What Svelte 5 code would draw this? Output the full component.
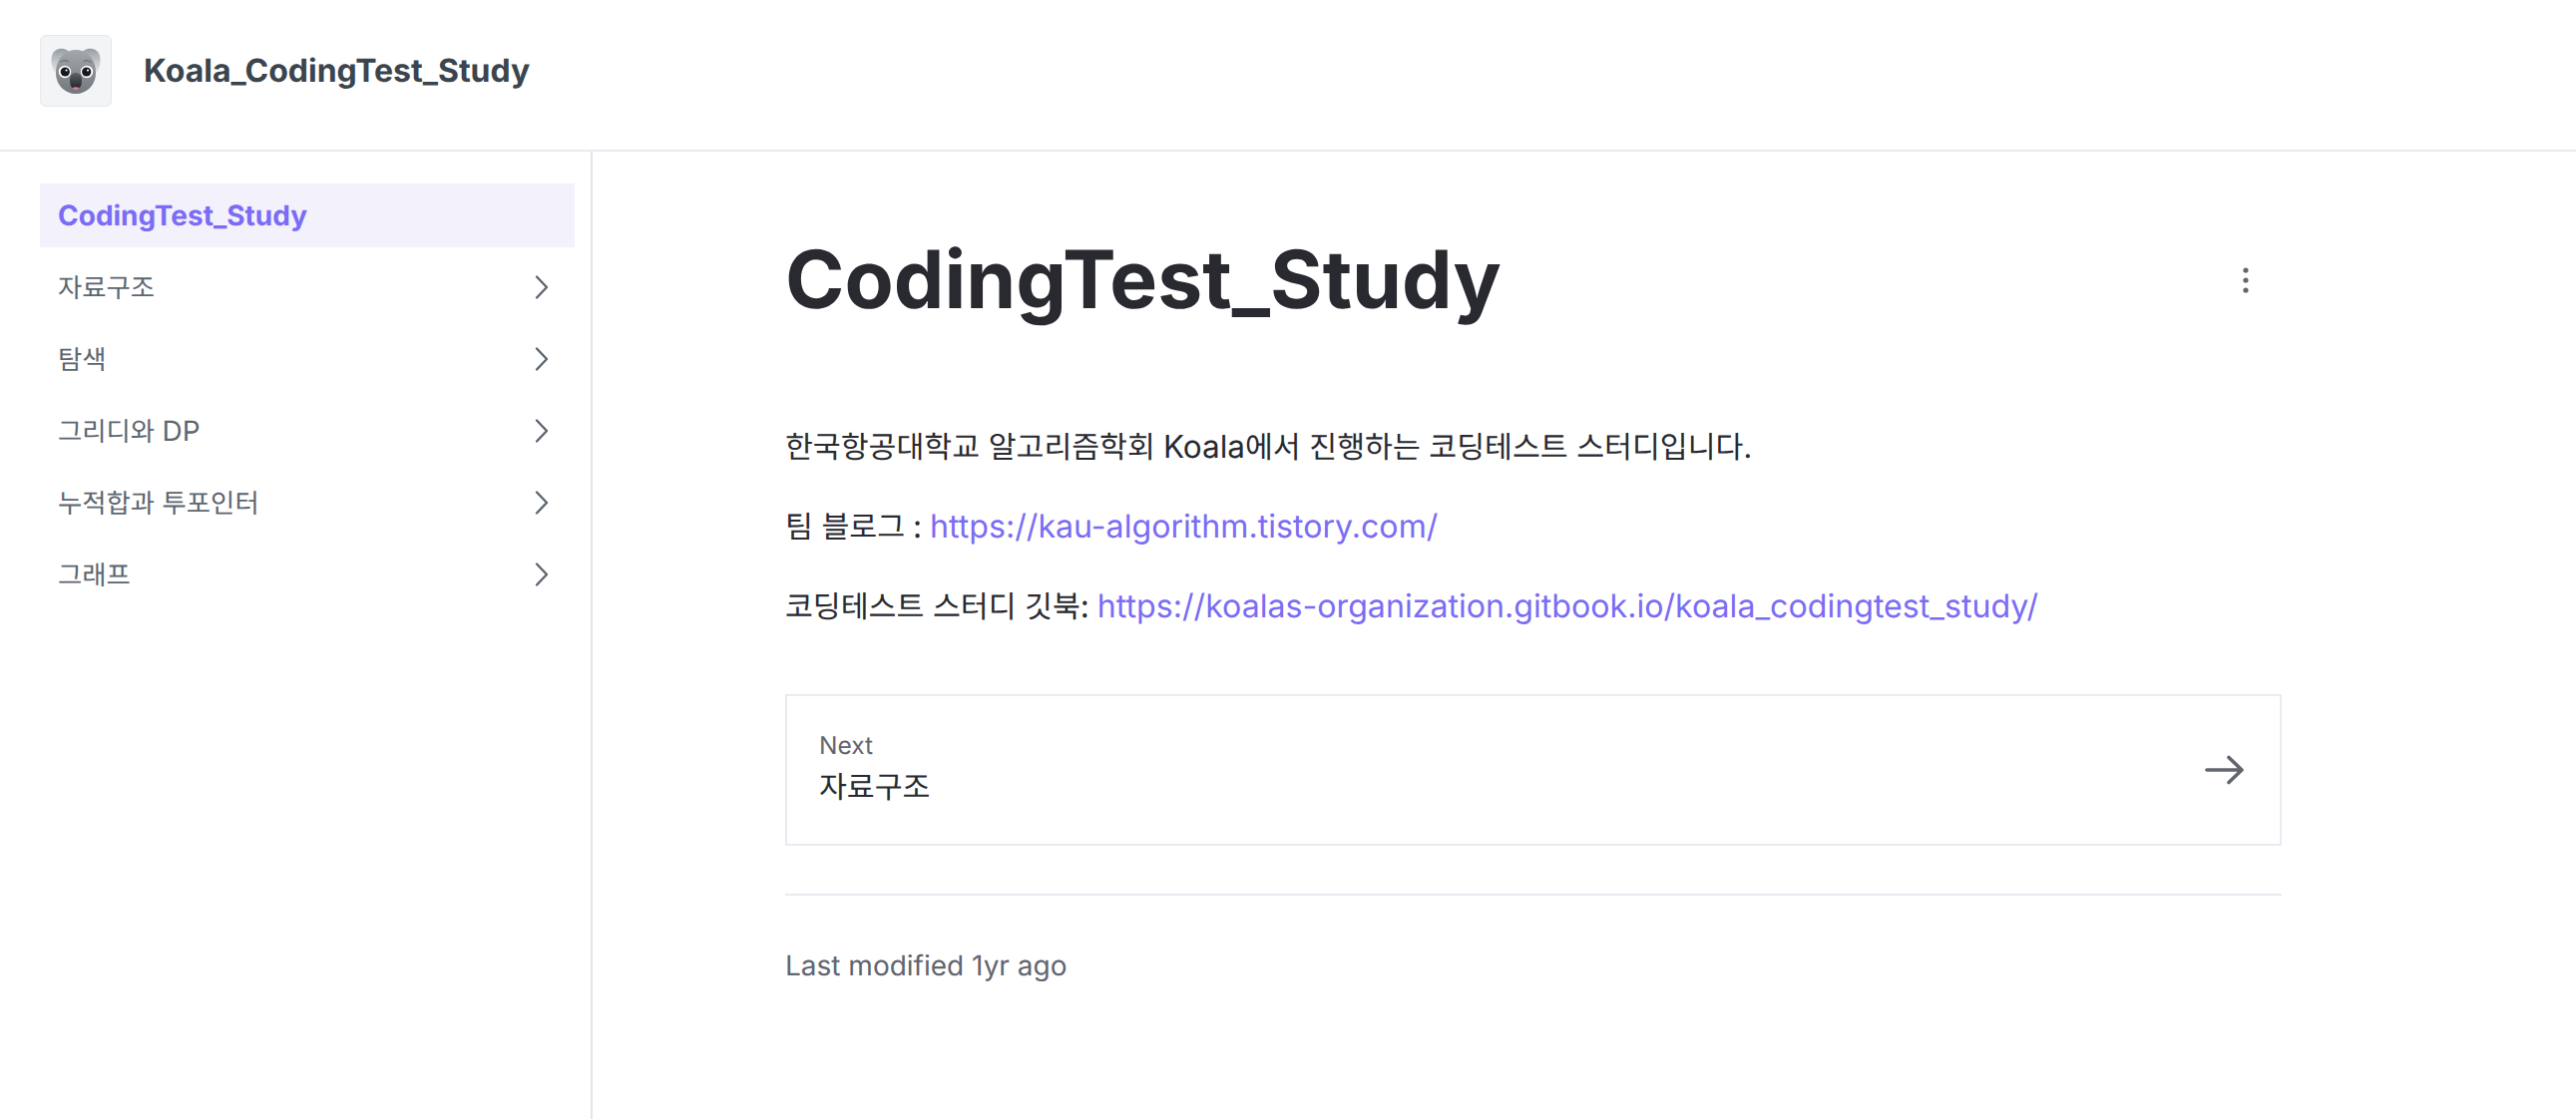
<script>
  const items = [
    { ko: '자료구조', en: '' },
    { ko: '탐색', en: '' },
    { ko: '그리디와 ', en: 'DP' },
    { ko: '누적합과 투포인터', en: '' },
    { ko: '그래프', en: '' }
  ];
</script>

<div class="page">
  <header class="top">
    <div class="logo">
      <svg class="koala" width="60" height="56" viewBox="0 0 60 56">
        <defs>
          <linearGradient id="face" x1="0" y1="0" x2="0" y2="1">
            <stop offset="0" stop-color="#a3a8ac" />
            <stop offset="1" stop-color="#71777b" />
          </linearGradient>
          <linearGradient id="ear" x1="0" y1="0" x2="0" y2="1">
            <stop offset="0" stop-color="#979da1" />
            <stop offset="0.5" stop-color="#c4c8ca" />
            <stop offset="1" stop-color="#eceef0" />
          </linearGradient>
          <linearGradient id="nose" x1="0" y1="0" x2="0" y2="1">
            <stop offset="0" stop-color="#5e6267" />
            <stop offset="1" stop-color="#26292d" />
          </linearGradient>
        </defs>
        <path d="M7 27 C4 18 5 9 13 7 C19 6 24 9 25 13 L13 33 C10 32 8 30 7 27Z" fill="url(#ear)" />
        <path d="M53 27 C56 18 55 9 47 7 C41 6 36 9 35 13 L47 33 C50 32 52 30 53 27Z" fill="url(#ear)" />
        <path d="M30 8 C18 8 10 18 10 31 C10 44 20 52 30 52 C40 52 50 44 50 31 C50 18 42 8 30 8Z" fill="url(#face)" />
        <path d="M15 20 Q18.5 17.5 22 19.5" stroke="#787e82" stroke-width="1.6" fill="none" stroke-linecap="round" />
        <path d="M38 19.5 Q41.5 17.5 45 20" stroke="#787e82" stroke-width="1.6" fill="none" stroke-linecap="round" />
        <circle cx="19" cy="30" r="6.2" fill="#fff" />
        <circle cx="41" cy="30" r="6.2" fill="#fff" />
        <circle cx="19.3" cy="30" r="4.6" fill="#17191f" />
        <circle cx="40.7" cy="30" r="4.6" fill="#17191f" />
        <circle cx="20.6" cy="28.5" r="1.1" fill="#fff" />
        <circle cx="42" cy="28.5" r="1.1" fill="#fff" />
        <path d="M26 45 Q30 51 34 45 L34 43 L26 43Z" fill="#ea7f98" />
        <path d="M30 31 C26 31 24 34 24 38 C24 42 25 46 27 46 Q30 44.5 33 46 C35 46 36 42 36 38 C36 34 34 31 30 31Z" fill="url(#nose)" />
      </svg>
    </div>
    <div class="brand">Koala_CodingTest_Study</div>
  </header>
  <div class="body">
    <aside class="side">
      <div class="item active">CodingTest_Study</div>
      {#each items as it}
        <div class="item">
          <span class="label"><span class="ko">{it.ko}</span>{it.en}</span>
          <svg class="chev" width="16" height="26" viewBox="0 0 16 26"><path d="M3 2.5 L13 13 L3 23.5" fill="none" stroke="#5c6670" stroke-width="2.4" stroke-linecap="round" stroke-linejoin="round" /></svg>
        </div>
      {/each}
    </aside>
    <main class="main">
      <div class="titlerow">
        <h1>CodingTest_Study</h1>
        <svg class="more" width="10" height="30" viewBox="0 0 10 30"><circle cx="5" cy="5" r="2.6" fill="#62656f" /><circle cx="5" cy="15" r="2.6" fill="#62656f" /><circle cx="5" cy="25" r="2.6" fill="#62656f" /></svg>
      </div>
      <p><span class="ko">한국항공대학교 알고리즘학회</span> <span class="tight">Koala</span><span class="ko">에서 진행하는 코딩테스트 스터디입니다.</span></p>
      <p><span class="ko">팀 블로그</span> <span class="tight">:</span> <a href="#a">https://kau-algorithm.tistory.com/</a></p>
      <p><span class="ko">코딩테스트 스터디 깃북</span><span class="tight">:</span> <a href="#b">https://koalas-organization.gitbook.io/koala_codingtest_study/</a></p>
      <div class="next">
        <div class="nexttext">
          <div class="lbl">Next</div>
          <div class="val">자료구조</div>
        </div>
        <svg width="40" height="32" viewBox="0 0 40 32"><path d="M3 16 H38 M25 3.5 L38 16 L25 28.5" fill="none" stroke="#62656f" stroke-width="3.6" stroke-linecap="round" stroke-linejoin="round" /></svg>
      </div>
      <div class="rule"></div>
      <div class="mod">Last modified 1yr ago</div>
    </main>
  </div>
</div>

<style>
  :global(body) { margin: 0; background: #fff; }
  .page { width: 2582px; height: 1122px; overflow: hidden; display: flex; flex-direction: column; font-family: Inter, "Noto Sans CJK KR", sans-serif; text-rendering: geometricPrecision; }
  .top { height: 150px; border-bottom: 2px solid #e6ecf1; display: flex; align-items: center; padding-left: 40px; flex: none; }
  .logo { width: 72px; height: 72px; box-sizing: border-box; border: 1.5px solid #e6e8eb; border-radius: 6px; background: #f3f4f6; display: flex; align-items: center; justify-content: center; margin-right: 32px; margin-top: -8px; }
  .koala { margin-bottom: 2px; flex: none; }
  .brand { font-weight: 700; font-size: 32px; color: #3b454e; margin-top: -9px; }
  .body { display: flex; flex: 1; }
  .side { padding: 32px 16px 0 40px; box-sizing: border-box; width: 594px; border-right: 2px solid #e3e5ea; flex: none; }
  .item { height: 72px; display: flex; align-items: center; justify-content: space-between; padding: 0 25px 0 18px; font-size: 28px; color: #5c6670; }
  .item .ko { font-size: 26.4px; }
  .label { position: relative; top: -2px; }
  .item.active { height: 64px; margin-bottom: 4px; background: #f3f1fc; color: #7b6cf5; font-weight: 700; }
  .main { margin-left: 193px; width: 1500px; }
  .titlerow { display: flex; justify-content: space-between; align-items: center; margin-top: 79px; padding-right: 31px; }
  h1 { margin: 0; font-size: 80.4px; line-height: 100px; font-weight: 700; color: #292a30; }
  .main p { margin: 0; font-size: 32px; word-spacing: -1px; line-height: 48px; color: #292a30; height: 48px; margin-bottom: 32px; }
  .main p .ko { font-size: 30.3px; word-spacing: 0; }
  .tight { font-size: 31.5px; }
  .titlerow + p { margin-top: 93px; }
  a { color: #7b6cf5; text-decoration: none; font-size: 32.15px; }
  .next { margin-top: 64px; height: 152px; box-sizing: border-box; border: 2px solid #e6ecf1; display: flex; align-items: center; justify-content: space-between; padding: 0 36px 0 32px; }
  .lbl { font-size: 24.5px; color: #62656f; line-height: 36px; margin-top: -3px; margin-bottom: 3px; }
  .val { font-size: 30.3px; color: #292a30; line-height: 44px; }
  .rule { height: 2px; background: #e6ecf1; margin-top: 48px; }
  .mod { font-size: 28px; color: #62656f; margin-top: 50px; line-height: 40px; }
</style>
